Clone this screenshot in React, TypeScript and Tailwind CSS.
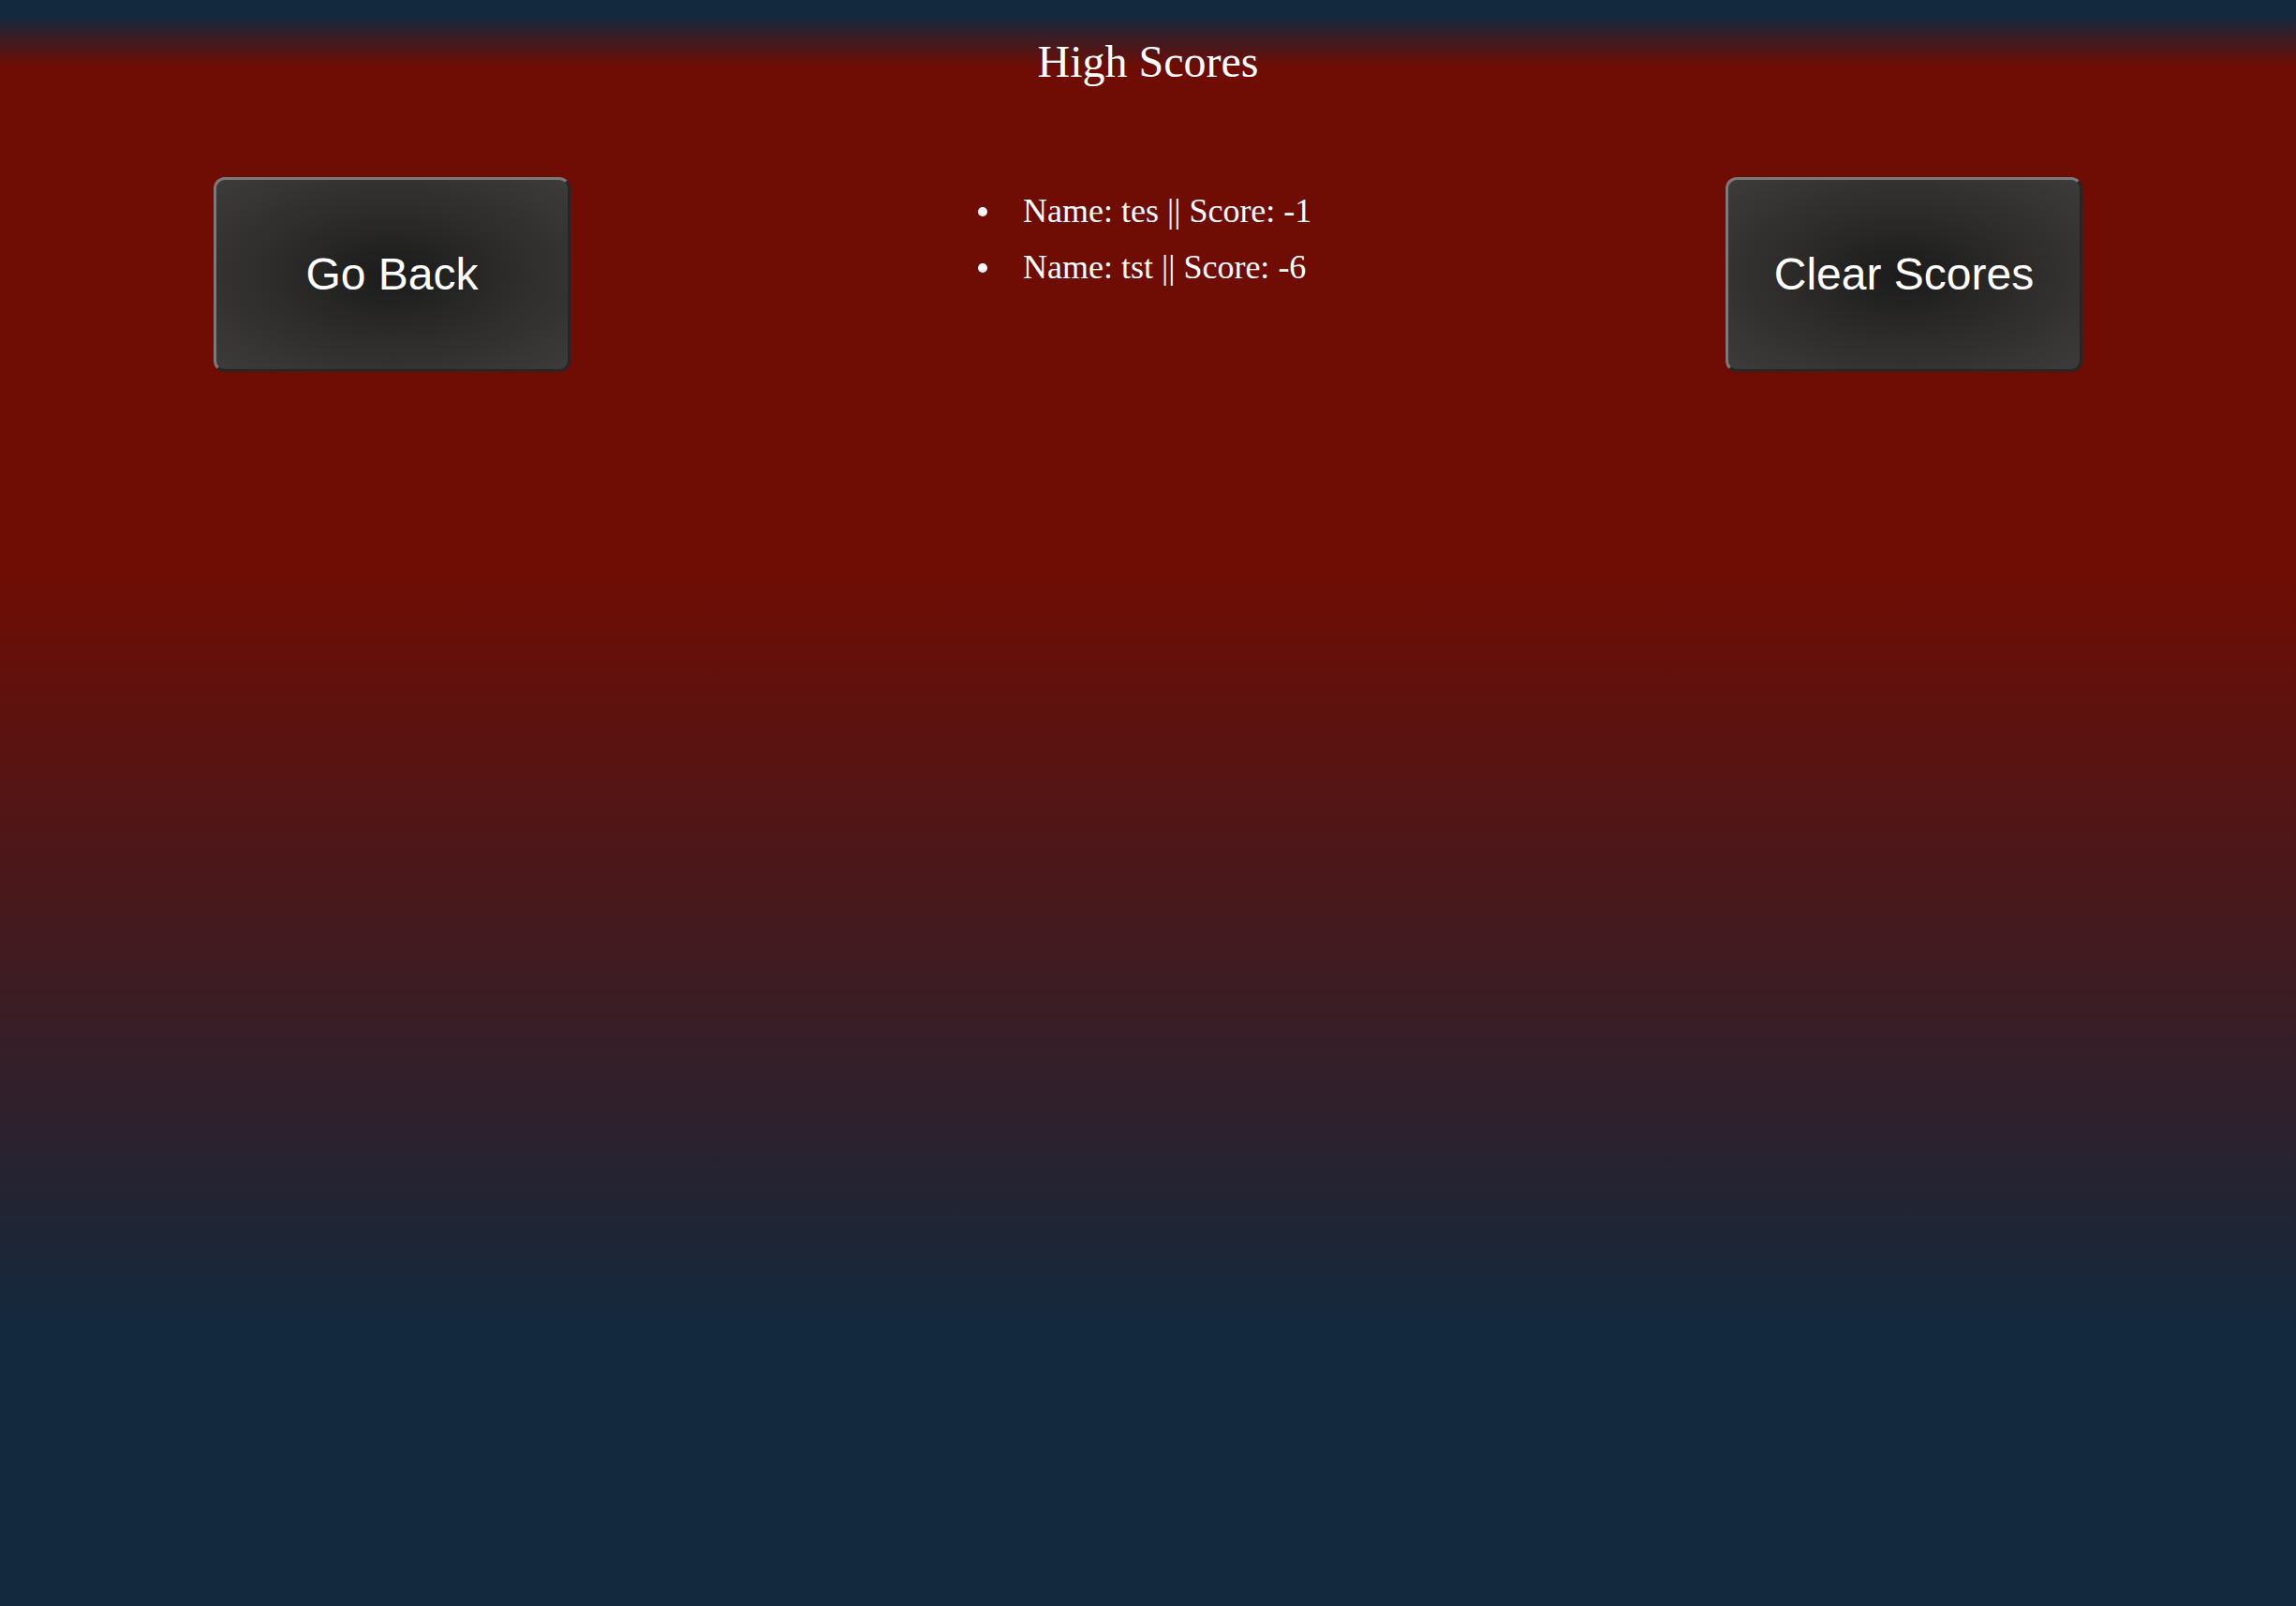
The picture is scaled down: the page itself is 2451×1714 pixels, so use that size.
const scores = [
  { name: 'tes', score: -1 },
  { name: 'tst', score: -6 },
];

const ScoreButton = ({ label }: { label: string }) => (
  <button className="w-[381px] h-[208px] flex items-center justify-center rounded-[12px] border-[3px] border-t-[#7a7a7a] border-l-[#7a7a7a] border-b-[#262626] border-r-[#262626] bg-[radial-gradient(ellipse_at_center,#1b1b1b_0%,#2c2b2a_45%,#3e3c3b_100%)] text-white text-[48px] font-['Liberation_Sans',Arial,sans-serif] shrink-0">
    {label}
  </button>
);

export default function App() {
  return (
    <div className="min-h-[1714px] w-full bg-[linear-gradient(to_bottom,#13293d_0%,#13293d_1%,#6f0c03_4.2%,#6f0c03_35%,#13293d_83%,#13293d_100%)] font-['Liberation_Serif','Times_New_Roman',serif] text-white">
      <h1 className="pt-[42px] text-center text-[48px] leading-[48px] font-normal">High Scores</h1>

      <div className="mt-[99px] flex items-start px-[228px]">
        <ScoreButton label="Go Back" />

        <ul className="flex-1 pl-[435px] pt-[6px]">
          {scores.map((s) => (
            <li key={s.name} className="flex items-start h-[60px]">
              <span className="mt-[26px] w-[10px] h-[10px] rounded-full bg-white shrink-0" />
              <span className="ml-[38px] text-[36px] leading-[60px] whitespace-nowrap">
                Name: {s.name} || Score: {s.score}
              </span>
            </li>
          ))}
        </ul>

        <ScoreButton label="Clear Scores" />
      </div>
    </div>
  );
}
